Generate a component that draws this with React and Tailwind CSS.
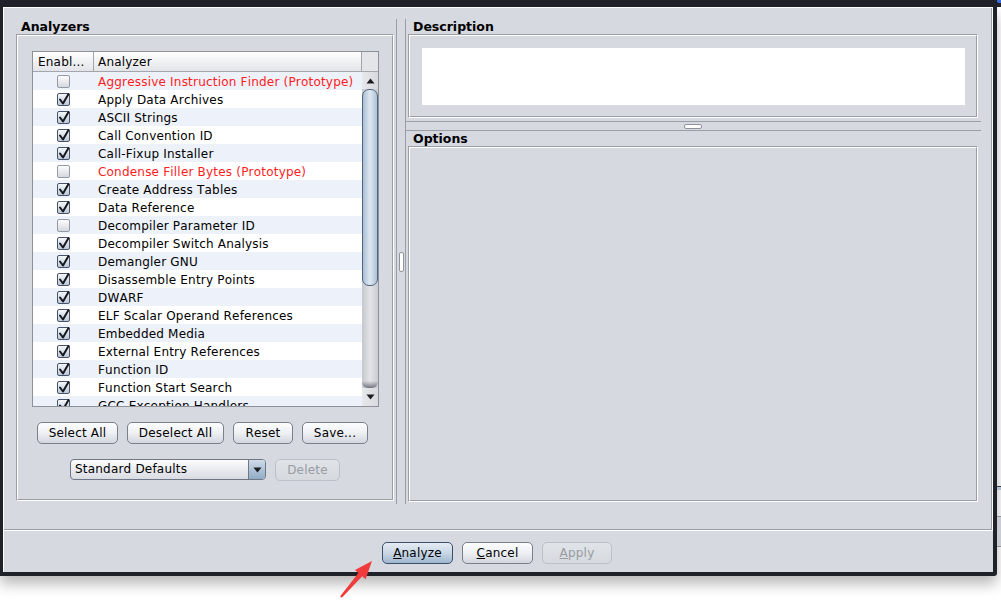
import React from 'react'

const ROWS = [
  ['Aggressive Instruction Finder (Prototype)', false, true],
  ['Apply Data Archives', true],
  ['ASCII Strings', true],
  ['Call Convention ID', true],
  ['Call-Fixup Installer', true],
  ['Condense Filler Bytes (Prototype)', false, true],
  ['Create Address Tables', true],
  ['Data Reference', true],
  ['Decompiler Parameter ID', false],
  ['Decompiler Switch Analysis', true],
  ['Demangler GNU', true],
  ['Disassemble Entry Points', true],
  ['DWARF', true],
  ['ELF Scalar Operand References', true],
  ['Embedded Media', true],
  ['External Entry References', true],
  ['Function ID', true],
  ['Function Start Search', true],
  ['GCC Exception Handlers', true],
]

// etched border: gray line then white line, like Swing's EtchedBorder
function Etched({ className = '', children }) {
  return (
    <div className={`border border-t-[#9a9ea5] border-l-[#9a9ea5] border-r-white border-b-white ${className}`}>
      <div className="w-full h-full border border-t-white border-l-white border-r-[#9a9ea5] border-b-[#9a9ea5]">
        {children}
      </div>
    </div>
  )
}

function Check({ on }) {
  return (
    <div
      className={`relative w-[13px] h-[13px] rounded-[2px] border ${
        on
          ? 'border-[#46536a] bg-gradient-to-b from-[#f6f8fb] to-[#bcc8d7]'
          : 'border-[#959ba6] bg-gradient-to-b from-[#fdfdfd] to-[#d4d8de]'
      }`}
    >
      {on && (
        <svg className="absolute -left-px -top-[2px]" width="14" height="14" viewBox="0 0 14 14">
          <path d="M3 7.5 L6 11.5 L11.5 2" fill="none" stroke="#16181c" strokeWidth="2" strokeLinecap="round" strokeLinejoin="round" />
        </svg>
      )}
    </div>
  )
}

function Btn({ w, children, kind = 'normal' }) {
  const look = {
    normal: 'border-[#78808c] bg-gradient-to-b from-[#fdfdfe] via-[#eef0f3] to-[#d2d6dd] text-black',
    default: 'border-[#3c506a] bg-gradient-to-b from-[#e4ecf4] via-[#c9d7e5] to-[#9fb7cf] text-black',
    disabled: 'border-[#bcc0c8] bg-gradient-to-b from-[#e0e3e7] to-[#d6d9de] text-[#989ca3]',
  }[kind]
  return (
    <div
      className={`h-[22px] shrink-0 rounded-[5px] border flex items-center justify-center leading-[20px] text-[12px] ${look}`}
      style={{ width: w }}
    >
      {children}
    </div>
  )
}

function Tri({ up }) {
  return (
    <svg width="9" height="6" viewBox="0 0 9 6">
      <path d={up ? 'M0.5 5.5 L4.5 0.5 L8.5 5.5 Z' : 'M0.5 0.5 L4.5 5.5 L8.5 0.5 Z'} fill="#1c1e22" />
    </svg>
  )
}

function Scrollbar() {
  return (
    <div className="w-[16px] h-full flex flex-col bg-gradient-to-r from-[#c4c7cc] via-[#e2e4e7] to-[#c9ccd1]">
      <div className="h-[17px] shrink-0 flex items-center justify-center bg-gradient-to-r from-[#e6e8eb] to-[#d7dade]">
        <Tri up />
      </div>
      <div className="h-[197px] shrink-0 rounded-[7px] border border-[#52657d] bg-gradient-to-r from-[#a9bfd6] via-[#dfe8f1] to-[#adc2d8]" />
      <div className="flex-1 flex flex-col justify-end">
        <div className="h-[7px] rounded-b-[6px] bg-gradient-to-b from-transparent to-[#70747b]" />
      </div>
      <div className="h-[18px] shrink-0 flex items-center justify-center bg-gradient-to-r from-[#e6e8eb] to-[#d7dade]">
        <Tri />
      </div>
    </div>
  )
}

function AnalyzerTable() {
  return (
    <div className="ml-[14px] mt-[15px] w-[347px] h-[356px] border border-[#8e9197] bg-white flex flex-col">
      <div className="h-[20px] shrink-0 flex border-b border-[#a3a6ac] bg-gradient-to-b from-white to-[#e2e4e8] leading-[21px]">
        <div className="w-[61px] border-r border-[#a3a6ac] pl-[5px]">Enabl...</div>
        <div className="w-[268px] border-r border-[#a3a6ac] pl-[4px]">Analyzer</div>
        <div className="w-[16px] bg-[#e3e5e8]" />
      </div>
      <div className="flex-1 flex min-h-0">
        <div className="w-[329px] overflow-hidden">
          {ROWS.map(([name, on, red], i) => (
            <div
              key={name}
              className={`h-[18px] flex items-center ${i % 2 === 0 ? 'bg-[#edf1fa]' : 'bg-white'}`}
            >
              <div className="w-[61px] flex justify-center">
                <Check on={on} />
              </div>
              <div className={`pl-[4px] pt-[2px] leading-[18px] whitespace-nowrap ${red ? 'text-[#ff1c1c]' : 'text-black'}`}>
                {name}
              </div>
            </div>
          ))}
        </div>
        <Scrollbar />
      </div>
    </div>
  )
}

function Combo() {
  return (
    <div className="w-[196px] h-[21px] rounded-[4px] border border-[#6f7787] flex overflow-hidden bg-gradient-to-b from-[#fcfcfd] to-[#d9dce2]">
      <div className="flex-1 pl-[4px] leading-[19px]">Standard Defaults</div>
      <div className="w-[17px] border-l border-[#6f7787] flex items-center justify-center bg-gradient-to-b from-[#cfdbe8] to-[#91abc6]">
        <Tri />
      </div>
    </div>
  )
}

function Grip({ vertical }) {
  return vertical ? (
    <div className="w-[5px] h-[20px] rounded-[2px] border border-[#8f949c] bg-white" />
  ) : (
    <div className="w-[18px] h-[5px] rounded-[2px] border border-[#8f949c] bg-white" />
  )
}

function Title({ children }) {
  return (
    <div className="h-[15px] leading-[15px] pl-[5px] text-[12.5px] font-bold tracking-normal text-black">{children}</div>
  )
}

export default function App() {
  return (
    <div className="relative w-[1001px] h-[613px] bg-white overflow-hidden font-['DejaVu_Sans',sans-serif] text-[12px] tracking-[0.2px] [font-kerning:none] text-black">
      {/* title bar remnant */}
      <div className="h-[7px] bg-[#1f2229] flex justify-end">
        <div className="w-[4px] h-[3px] rounded-bl-[2px] bg-[#3a6fd8]" />
      </div>

      <div className="flex">
        {/* dialog */}
        <div className="w-[997px] h-[569px] bg-[#1f2229] pl-[3px] pr-[4px] pb-[4px] rounded-br-[3px] shadow-[0_8px_14px_rgba(0,0,0,0.28)]">
          <div className="w-[990px] h-[565px] bg-[#d6d9df] border-l border-t border-white flex flex-col">
            <div className="h-[523px] border-r border-b border-white">
              <div className="h-full border-r border-b border-[#9a9ea5] pt-[11px]">
                <div className="flex h-[485px]">
                  {/* left: analyzers */}
                  <div className="w-[392px] pl-[12px]">
                    <Title>Analyzers</Title>
                    <Etched className="w-[378px] h-[467px]">
                      <AnalyzerTable />
                      <div className="mt-[15px] pl-[19px] flex gap-[9px]">
                        <Btn w={81}>Select All</Btn>
                        <Btn w={97}>Deselect All</Btn>
                        <Btn w={60}>Reset</Btn>
                        <Btn w={66}>Save...</Btn>
                      </div>
                      <div className="mt-[15px] flex justify-center gap-[9px]">
                        <Combo />
                        <Btn w={65} kind="disabled">Delete</Btn>
                      </div>
                    </Etched>
                  </div>

                  {/* split divider */}
                  <div className="w-[10px] border-l border-r border-[#9a9ea5] flex items-center justify-center">
                    <Grip vertical />
                  </div>

                  {/* right: description / options */}
                  <div className="w-[575px] flex flex-col">
                    <div className="ml-[2px]">
                      <Title>Description</Title>
                      <Etched className="w-[570px] h-[84px]">
                        <div className="m-[12px] w-[543px] h-[57px] bg-white" />
                      </Etched>
                    </div>
                    <div className="mt-[3px] -ml-px w-[576px] h-[10px] border-t border-b border-[#9a9ea5] flex items-center justify-center">
                      <Grip />
                    </div>
                    <div className="ml-[2px]">
                      <Title>Options</Title>
                      <Etched className="w-[570px] h-[356px]" />
                    </div>
                  </div>
                </div>
              </div>
            </div>

            {/* button bar */}
            <div className="flex-1 pt-[11px] pl-[378px] flex gap-[9px]">
              <Btn w={71} kind="default"><span><span className="underline">A</span>nalyze</span></Btn>
              <Btn w={71}><span><span className="underline">C</span>ancel</span></Btn>
              <Btn w={70} kind="disabled"><span><span className="underline">A</span>pply</span></Btn>
            </div>
          </div>
        </div>

        {/* sliver of the window behind */}
        <div className="w-[4px] flex flex-col">
          <div className="h-[479px]" />
          <div className="h-px bg-[#3a3d44]" />
          <div className="h-[3px] bg-[#b3c2d3]" />
          <div className="h-[26px]" />
          <div className="h-[31px] bg-[#c9ccd2] border-t border-b border-[#8e939b]" />
        </div>
      </div>

      {/* red annotation arrow */}
      <svg className="absolute left-0 top-0 pointer-events-none" width="1001" height="613">
        <polygon
          points="340.2,596.3 358.4,573 355,570 372,561 365.6,579.2 362.2,576.2 341.8,597.7"
          fill="#ef3b3b"
        />
      </svg>
    </div>
  )
}
